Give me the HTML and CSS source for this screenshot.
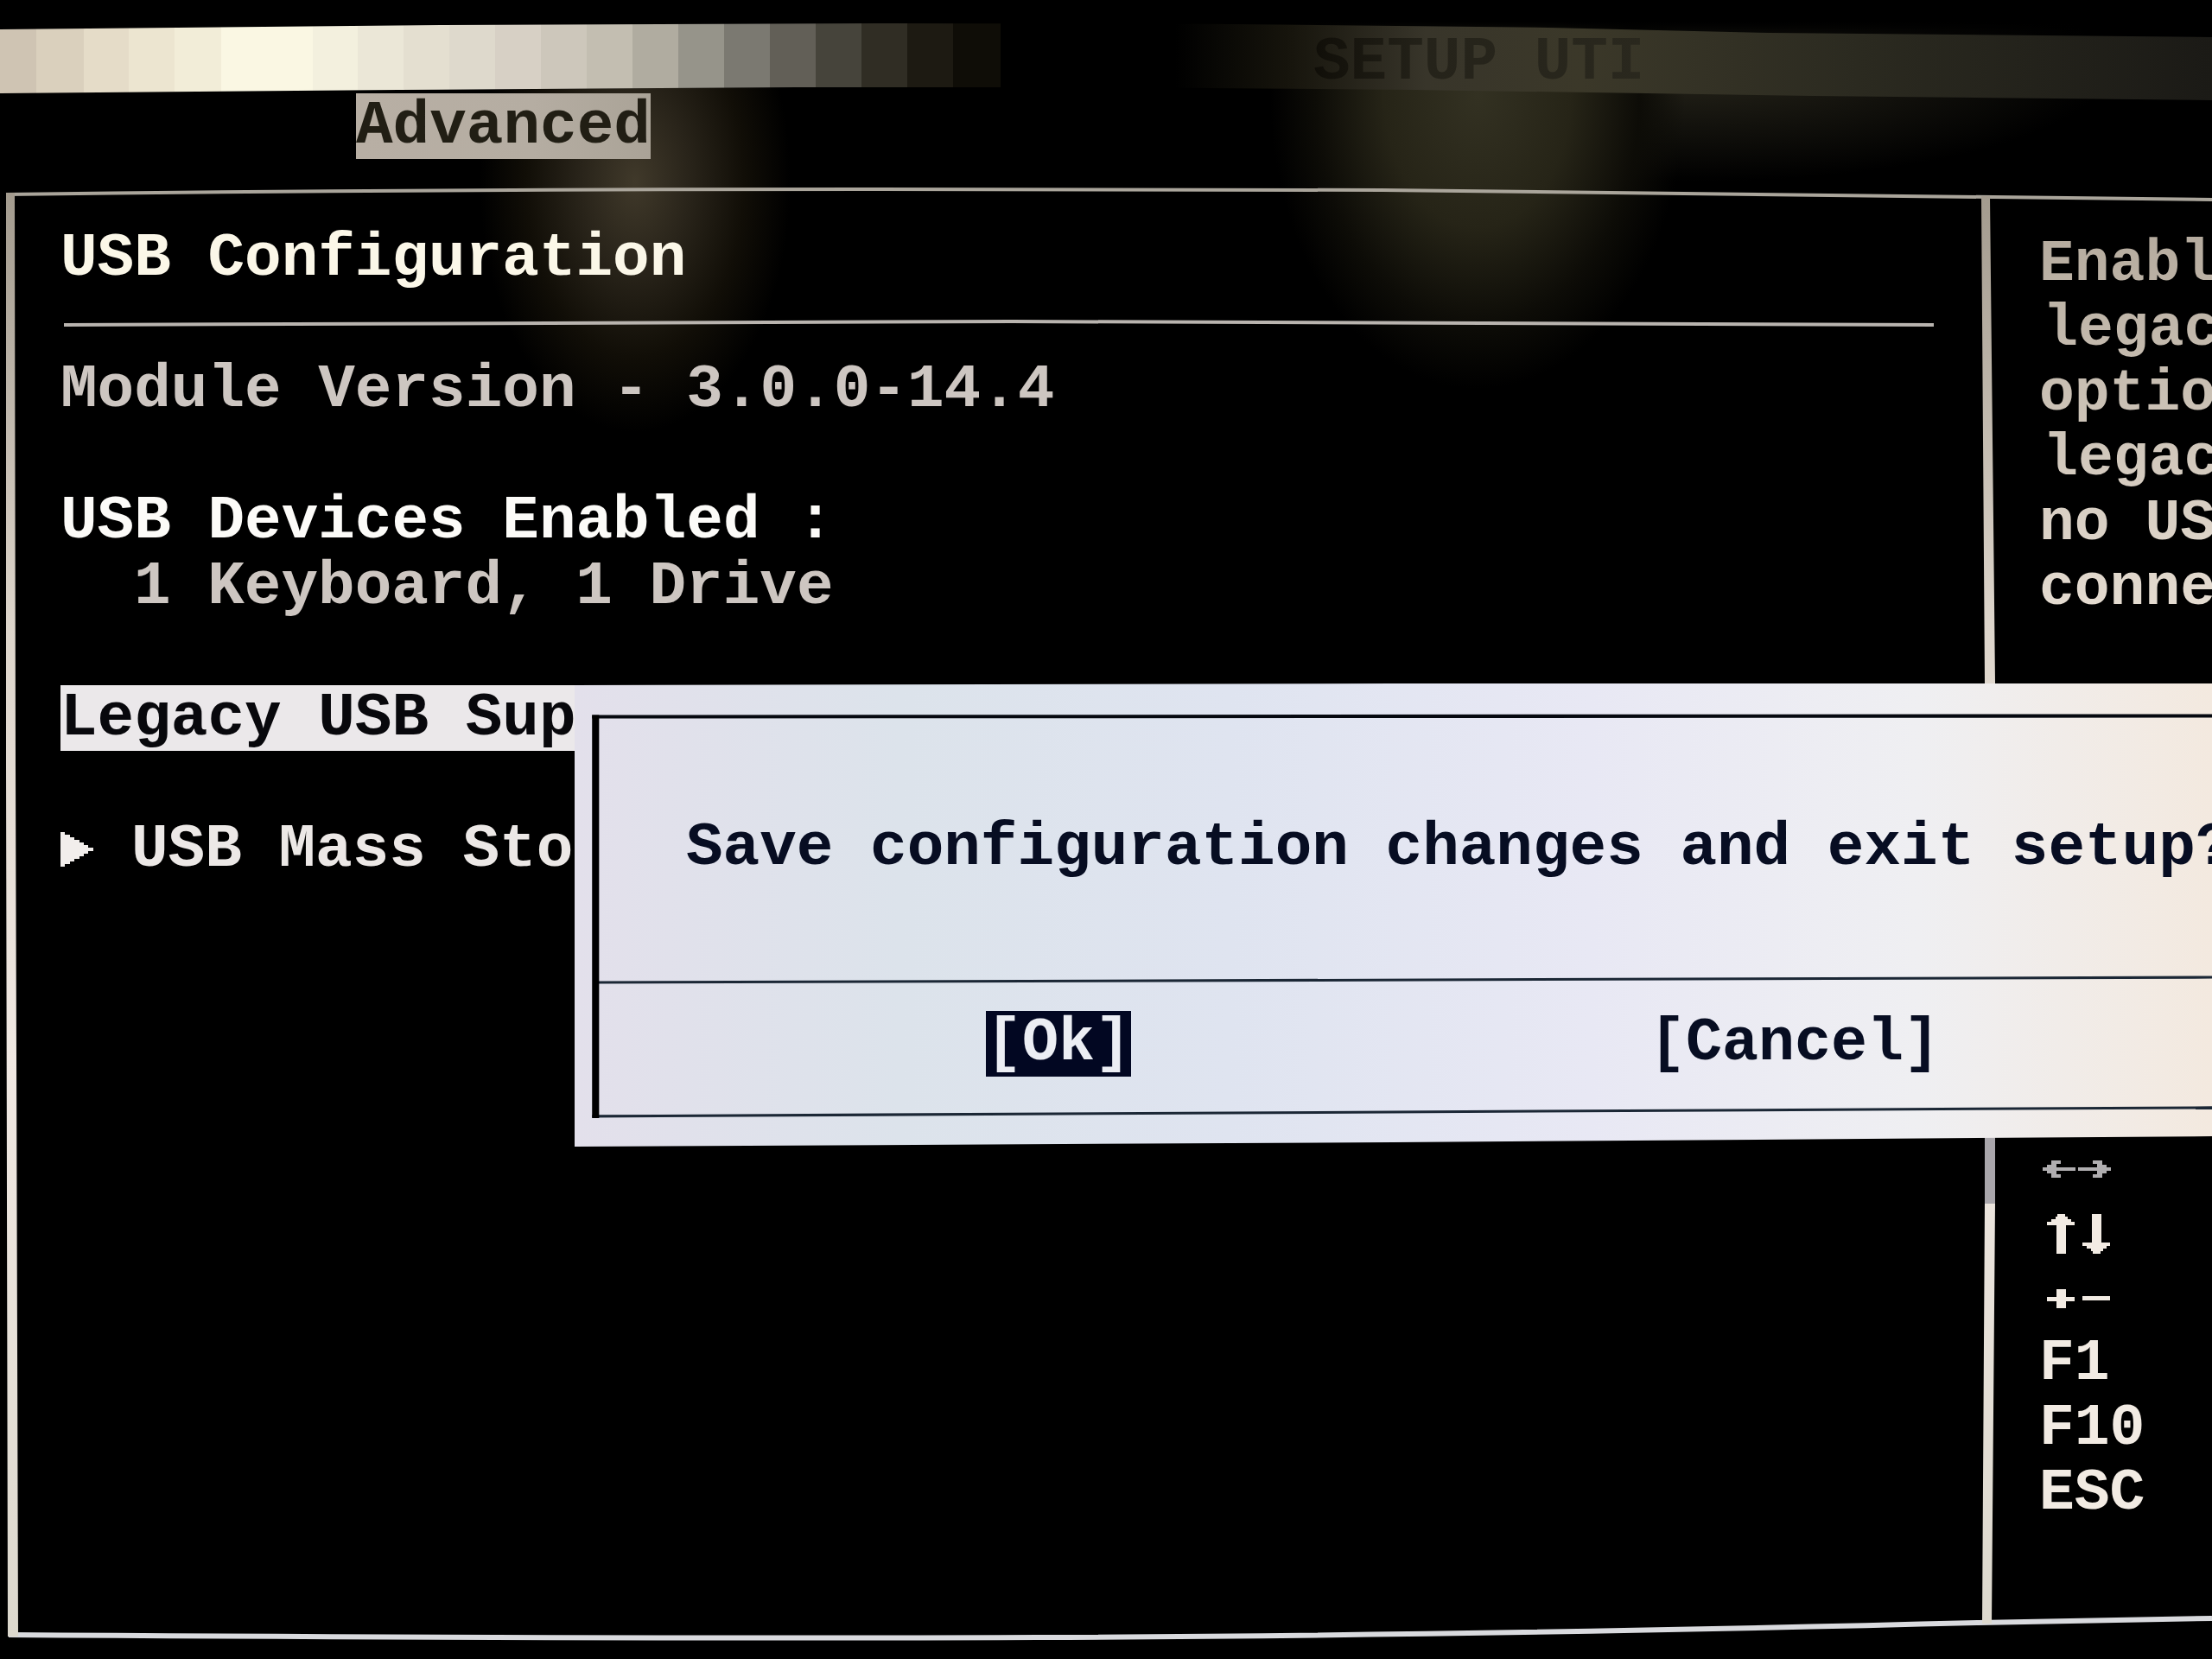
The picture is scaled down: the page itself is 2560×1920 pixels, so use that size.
FILE: index.html
```html
<!DOCTYPE html>
<html lang="en">
<head>
<meta charset="utf-8">
<title>Setup Utility - USB Configuration</title>
<link rel="stylesheet" href="styles.css">
</head>
<body>
<div class="screen">
  <header class="titlebar"><span class="title">SETUP UTI</span></header>
  <nav class="tabs"><a class="tab" href="#advanced">Advanced</a></nav>

  <main class="frame" id="advanced">
    <svg class="frame-lines" viewBox="0 0 2560 1736" preserveAspectRatio="none" aria-hidden="true">
      <defs>
        <linearGradient id="side" x1="0" y1="0" x2="0" y2="1">
          <stop offset="0" stop-color="#a39b8e"/>
          <stop offset="0.3" stop-color="#ddd5cb"/>
          <stop offset="0.6" stop-color="#f0e8e2"/>
          <stop offset="1" stop-color="#dcd8cd"/>
        </linearGradient>
      </defs>
      <path class="line-top" d="M7 41 Q500 35 1000 35 T1600 36 Q2000 39 2560 47"/>
      <path class="line-bottom" d="M10 1708 Q700 1713 1200 1711 T2290 1694 L2560 1689"/>
      <path fill="url(#side)" d="M7 39 H17 L18 700 L21 1710 H9 L7 700Z"/>
      <path fill="url(#side)" d="M2293 43 H2303 L2309 606 V1208 L2305 1695 H2294 L2297 1208 V606Z"/>
      <path fill="#a9a6ab" d="M2297 1130 H2309 V1209 H2297Z"/>
    </svg>

    <section class="content">
      <h1 class="row strong warm">USB Configuration</h1>
      <svg class="rule" viewBox="0 0 2166 76" preserveAspectRatio="none" aria-hidden="true">
        <path d="M4 39 Q500 35 1100 35 T2166 39"/>
      </svg>
      <p class="row">Module Version - 3.0.0-14.4</p>
      <h2 class="row strong spaced">USB Devices Enabled :</h2>
      <p class="row devices">1 Keyboard, 1 Drive</p>
      <a class="row option selected spaced" href="#legacy">Legacy USB Sup</a>
      <a class="row option spaced" href="#storage">
        <svg class="marker" viewBox="0 0 38 40" aria-hidden="true"><path d="M0 0H5V3H11V6H16V9H22V12H27V15H32V18H38V22H32V25H27V28H22V31H16V34H11V37H5V40H0Z"/></svg>USB Mass Sto</a>
    </section>

    <aside class="help">
      <p class="help-text">Enabl<br>&#8202;legac<br>optio<br>&#8202;legac<br>no US<br>conne</p>
      <ul class="keys">
        <li class="key dim">
          <svg class="arrow" viewBox="0 0 38 20" aria-label="Left"><path d="M0 8H5V5H10V0H21V4H16V8H38V12H16V16H21V20H10V15H5V12H0Z"/></svg>
          <svg class="arrow" viewBox="0 0 38 20" aria-label="Right"><path d="M38 8H33V5H28V0H17V4H22V8H0V12H22V16H17V20H28V15H33V12H38Z"/></svg>
        </li>
        <li class="key vertical">
          <svg class="arrow" viewBox="0 0 38 46" aria-label="Up"><path d="M5 9H10V6H15V3H17V0H26V3H29V6H33V9H37V13H27V46H16V13H5Z"/></svg>
          <svg class="arrow" viewBox="0 0 38 46" aria-label="Down"><path d="M5 37H10V40H15V43H17V46H26V43H29V40H33V37H37V33H27V0H16V33H5Z"/></svg>
        </li>
        <li class="key vertical">
          <svg class="arrow" viewBox="0 0 38 22" aria-label="Plus"><path d="M5 9H16V0H27V9H37V14H27V22H16V14H5Z"/></svg>
          <svg class="arrow" viewBox="0 0 38 22" aria-label="Minus"><path d="M5 8H37V13H5Z"/></svg>
        </li>
        <li class="key">F1</li>
        <li class="key">F10</li>
        <li class="key">ESC</li>
      </ul>
    </aside>
  </main>

  <div class="dialog" role="dialog" aria-labelledby="question">
    <svg class="dialog-lines" viewBox="0 0 1896 536" preserveAspectRatio="none" aria-hidden="true">
      <path d="M20 39 Q900 36 1896 38"/>
      <path class="thin" d="M24 343 Q900 339 1896 337"/>
      <path class="thin" d="M20 496 Q900 490 1896 486"/>
      <path class="edge" d="M24 37V498"/>
    </svg>
    <div class="dialog-body">
      <p class="question" id="question">Save configuration changes and exit setup?</p>
      <div class="actions">
        <button class="action primary" type="button">[Ok]</button>
        <button class="action" type="button">[Cancel]</button>
      </div>
    </div>
  </div>
</div>
</body>
</html>
```
FILE: styles.css
```css
* { box-sizing: border-box; margin: 0; padding: 0; }

body {
  background: #000;
  color: #cdc6c1;
  font: bold 71px/76px "Liberation Mono", monospace;
}

.screen {
  position: relative;
  display: flex;
  flex-direction: column;
  min-height: 100vh;
  padding-top: 26px;
  overflow: hidden;
  background:
    linear-gradient(#000 26px, transparent 60px),
    radial-gradient(ellipse 180px 290px at 735px 210px, #40392a 0%, #29241a 35%, #110e07 70%, transparent 100%),
    radial-gradient(ellipse 240px 340px at 1710px 110px, #333122 0%, #262417 45%, #0d0c07 78%, transparent 100%),
    radial-gradient(ellipse 480px 130px at 1960px 80px, #26241a 0%, transparent 100%),
    #000;
}

/* Title strip: a stepped fade from cream to black, then a faint reflection */
.titlebar {
  height: 90px;
  padding: 8px 0 0 1520px;
  white-space: nowrap;
  clip-path: polygon(0 8px, 20% 3px, 40% 1px, 56% 2px, 70% 6px, 80% 12px, 100% 17px, 100% 90px, 82% 85px, 64% 78px, 50% 75px, 36% 75px, 18% 78px, 0 82px);
  background:
    linear-gradient(90deg,
      #cfc4b3 0 42px, #dad0bd 42px 97px, #e5dcc8 97px 149px, #ece5d0 149px 202px,
      #f2edd8 202px 256px, #faf7e3 256px 362px, #f3f0de 362px 414px, #ebe7d7 414px 467px,
      #e4dfd0 467px 520px, #ded9cc 520px 573px, #d7d0c5 573px 626px, #cdc7bb 626px 679px,
      #c3beb1 679px 732px, #b0aca0 732px 785px, #96948a 785px 838px, #7b7971 838px 891px,
      #625f57 891px 944px, #46443b 944px 997px, #302d24 997px 1050px, #1d1a12 1050px 1103px,
      #0f0d07 1103px 1158px, transparent 1158px),
    linear-gradient(90deg, #000 1360px, #16140c 1490px, #38352a 1650px, #3b3829 1830px, #2b2a20 2150px, #1b1a16 2560px);
}

.title {
  color: transparent;
  background: linear-gradient(90deg, #100e08, #25231a 35%, #2a281e);
  background-clip: text;
}

.tabs { display: flex; height: 76px; margin-top: -8px; padding-left: 412px; }
.tab {
  height: 76px;
  color: #211e14;
  background: linear-gradient(90deg, #b8afa4, #b5ada2 60%, #aaa397);
  text-decoration: none;
}

.frame {
  flex: 1;
  display: grid;
  grid-template-columns: 9fr 1fr;
}
.frame-lines { grid-area: 1 / 1 / 2 / 3; width: 100%; height: 100%; }
.line-top, .line-bottom { fill: none; stroke: #aaa59b; stroke-width: 4; }
.line-bottom { stroke: #d9dade; stroke-width: 6; }

.content {
  grid-area: 1 / 1;
  display: flex;
  flex-direction: column;
  align-items: flex-start;
  padding: 77px 66px 0 70px;
  white-space: nowrap;
}
.row { font-size: 71px; line-height: 76px; }
.strong { color: #fcfbf8; }
.warm { color: #fbf7e8; }
.spaced { margin-top: 76px; }
.devices { padding-left: 85px; }
.rule { width: 100%; height: 76px; }
.rule path { fill: none; stroke: #b9b4af; stroke-width: 4; }

.option { display: flex; align-items: center; color: #ece8e6; text-decoration: none; }
.selected { color: #08080c; background: #ebe8ea; }
.marker { width: 38px; height: 40px; margin-right: 44px; fill: #f2eeec; }

.help {
  grid-area: 1 / 2;
  display: flex;
  flex-direction: column;
  gap: 597px;
  padding: 84px 0 0 56px;
  overflow: hidden;
  font-size: 68px;
  line-height: 75px;
  white-space: nowrap;
}
.help-text {
  color: transparent;
  background: linear-gradient(#b5ab9e, #e6ddd2);
  background-clip: text;
}
.keys { list-style: none; color: #f2ebe3; }
.key { display: flex; align-items: center; gap: 3px; height: 75px; fill: currentColor; }
.dim { color: #b0aeb0; }
.dim, .vertical { padding-left: 4px; }
.arrow { width: 38px; }

.dialog {
  position: absolute;
  top: 790px;
  left: 665px;
  right: 0;
  display: grid;
  overflow: hidden;
  color: #070d22;
  font-size: 70px;
  white-space: nowrap;
  background: linear-gradient(90deg, #e3e0eb, #dce3eb 20%, #dfe4f0 40%, #e8e8f4 62%, #efeff2 82%, #f3e9df);
  clip-path: polygon(0 3px, 50% 1px, 100% 1px, 100% 525px, 50% 532px, 0 537px);
}
.dialog-lines { grid-area: 1 / 1; width: 100%; height: 100%; }
.dialog-lines path { fill: none; stroke: #05080f; stroke-width: 4; }
.dialog-lines .thin { stroke: #1b2735; stroke-width: 3; }
.dialog-lines .edge { stroke: #000; stroke-width: 8; }
.dialog-body { grid-area: 1 / 1; padding: 40px 0 42px 28px; }
.question { height: 302px; padding-left: 101px; font-size: 71px; line-height: 302px; }
.actions { display: flex; align-items: center; gap: 600px; height: 152px; padding-left: 448px; }
.action {
  height: 76px;
  border: 0;
  background: none;
  color: inherit;
  font: inherit;
  line-height: 76px;
}
.primary { color: #eceef4; background: #020722; }
```
